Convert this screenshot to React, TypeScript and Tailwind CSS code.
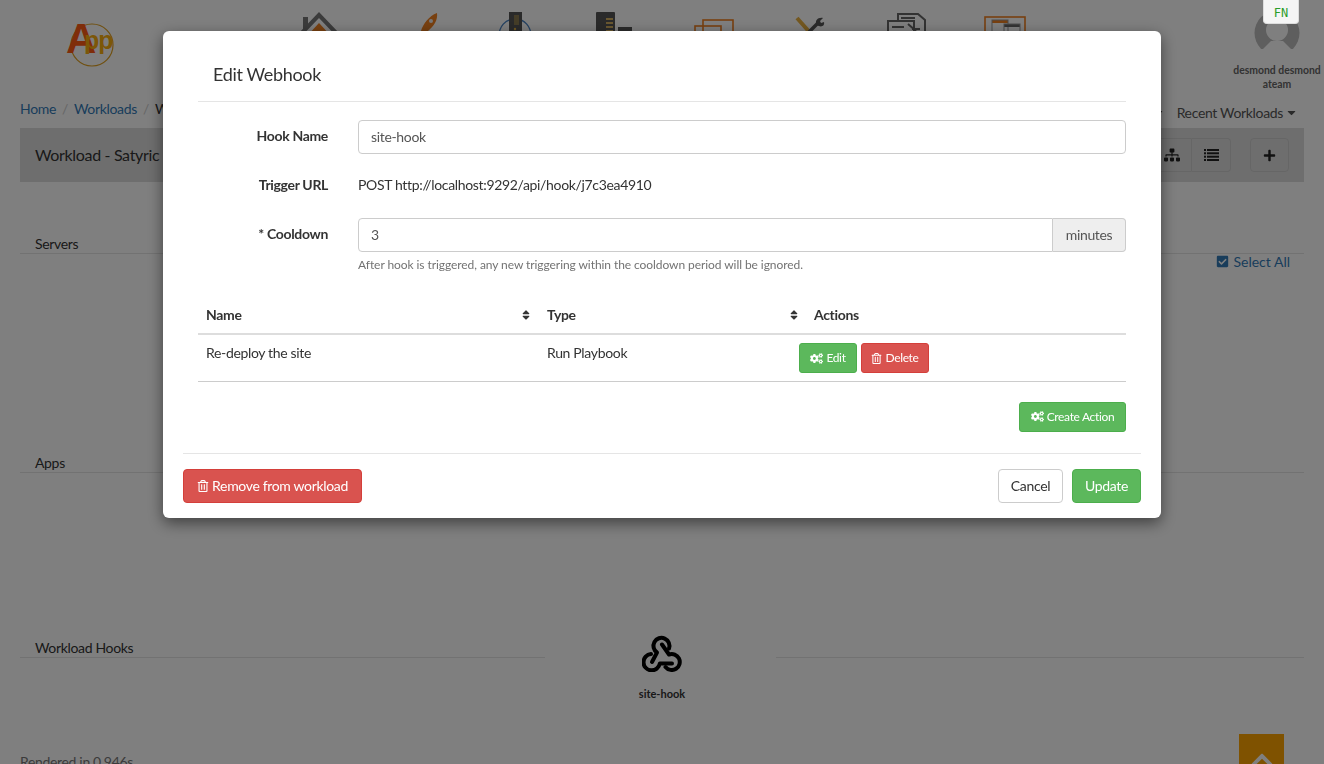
import React from "react";
import { FaCogs, FaRegTrashAlt, FaSort, FaSitemap, FaPlus, FaCheckSquare, FaCaretDown, FaChevronUp } from "react-icons/fa";

function Logo() {
  return (
    <svg width="50" height="48" viewBox="0 0 50 48" className="block">
      <circle cx="27" cy="23" r="21" fill="none" stroke="#e0a020" strokeWidth="1.2" />
      <text x="1" y="31" fontFamily="Liberation Sans, sans-serif" fontWeight="700" fontSize="42" fill="#ff5a14">A</text>
      <text x="19" y="27" fontFamily="Liberation Sans, sans-serif" fontWeight="700" fontSize="25" fill="#f8ae10" letterSpacing="-1">pp</text>
    </svg>
  );
}

function WebhookIcon() {
  return (
    <svg width="40" height="37" viewBox="0 0 40 37" fill="none" stroke="#000" strokeWidth="4" strokeLinecap="round" strokeLinejoin="round" className="block">
      <path d="M10 27 15 17.500A8 8 0 1 1 27 13.500" />
      <path d="M9 19A8.200 8.200 0 1 0 17.800 28.500H30" />
      <path d="M23.500 32A8 8 0 1 0 27 19.500L20 9.500" />
    </svg>
  );
}

function NavIcons() {
  return (
    <div className="flex ml-[155px] pt-3">
      <div className="w-[98px] flex justify-center">
        <svg width="44" height="24" viewBox="0 0 44 24">
          <path d="M6 5h5v8l-5 5z" fill="#777" />
          <path d="M2 24 22 3l20 21" fill="none" stroke="#777" strokeWidth="4" />
          <path d="M10 24 22 11l12 13z" fill="#f08020" />
        </svg>
      </div>
      <div className="w-[98px] flex justify-center">
        <svg width="36" height="24" viewBox="0 0 36 24" className="ml-[12px]">
          <path d="M32 1c1 7-3 13-9 18l-6 5H6c2-4 6-5 10-5 2-7 8-15 16-18z" fill="#f08020" />
          <circle cx="26" cy="9" r="2" fill="#eee" />
        </svg>
      </div>
      <div className="w-[98px] flex justify-center">
        <svg width="36" height="24" viewBox="0 0 36 24">
          <path d="M2 24C2 15 8 7 18 7s16 8 16 17" fill="none" stroke="#4a84c4" strokeWidth="1.4" />
          <rect x="12" y="0" width="13" height="24" fill="#555" />
          <rect x="17" y="3" width="5" height="10" fill="#8a7a50" />
          <circle cx="18" cy="17" r="1.2" fill="#e0b040" />
        </svg>
      </div>
      <div className="w-[98px] flex justify-center">
        <svg width="40" height="24" viewBox="0 0 40 24">
          <rect x="3" y="0" width="19" height="24" rx="1" fill="#555" />
          <rect x="13" y="6" width="7" height="2" fill="#d4b060" />
          <rect x="13" y="10" width="7" height="2" fill="#d4b060" />
          <rect x="13" y="14" width="7" height="2" fill="#d4b060" />
          <rect x="13" y="18" width="7" height="2" fill="#d4b060" />
          <rect x="25" y="15" width="14" height="9" fill="#555" />
        </svg>
      </div>
      <div className="w-[98px] flex justify-center">
        <svg width="42" height="24" viewBox="0 0 42 24" className="ml-[6px]">
          <rect x="10" y="8" width="30" height="24" fill="none" stroke="#f08020" strokeWidth="1.6" />
          <rect x="2" y="14" width="26" height="20" fill="none" stroke="#f08020" strokeWidth="1.6" />
        </svg>
      </div>
      <div className="w-[98px] flex justify-center">
        <svg width="40" height="24" viewBox="0 0 40 24">
          <path d="M8 6 24 24" stroke="#e8b040" strokeWidth="4" />
          <path d="M16 24 30 10" stroke="#555" strokeWidth="3.5" />
          <path d="M28 13c-3-4 1-8 6-7l-3 3 1 2 3-1c1 4-3 6-7 3z" fill="#555" />
        </svg>
      </div>
      <div className="w-[98px] flex justify-center">
        <svg width="42" height="24" viewBox="0 0 42 24">
          <path d="M12 8V2h20l7 6v16" fill="none" stroke="#666" strokeWidth="2" />
          <rect x="2" y="9" width="26" height="18" fill="none" stroke="#666" strokeWidth="2" />
          <path d="M15 6h14M6 15h12M22 12l8 7M26 17h8" stroke="#666" strokeWidth="2" />
        </svg>
      </div>
      <div className="w-[98px] flex justify-center">
        <svg width="42" height="24" viewBox="0 0 42 24">
          <rect x="1" y="5" width="40" height="24" fill="none" stroke="#f08020" strokeWidth="1.6" />
          <rect x="8" y="8" width="16" height="3" fill="#f08020" />
          <rect x="8" y="8" width="16" height="20" fill="none" stroke="#999" strokeWidth="1" />
          <rect x="20" y="12" width="16" height="3" fill="#666" />
          <rect x="20" y="12" width="16" height="20" fill="none" stroke="#999" strokeWidth="1" />
        </svg>
      </div>
    </div>
  );
}

function Avatar() {
  return (
    <svg width="46" height="46" viewBox="0 0 46 46" className="block">
      <circle cx="23" cy="23" r="22.5" fill="#bcbcbc" />
      <circle cx="23" cy="20" r="11" fill="#fff" />
      <path d="M0 46V39H9L17 31H29L37 39H46V46z" fill="#fff" />
    </svg>
  );
}

function ListIcon() {
  return (
    <svg width="15" height="12" viewBox="0 0 15 12" fill="#222">
      <rect x="0" y="0" width="2" height="2" />
      <rect x="3" y="0" width="12" height="2" />
      <rect x="0" y="3.3" width="2" height="2" />
      <rect x="3" y="3.3" width="12" height="2" />
      <rect x="0" y="6.7" width="2" height="2" />
      <rect x="3" y="6.7" width="12" height="2" />
      <rect x="0" y="10" width="2" height="2" />
      <rect x="3" y="10" width="12" height="2" />
    </svg>
  );
}

function SectionTitle({ children, className }: { children: React.ReactNode; className?: string }) {
  return <div className={"text-[14px] leading-[18px] pl-[15px] border-b border-[#e5e5e5] " + (className ?? "")}>{children}</div>;
}

function Background() {
  return (
    <div className="h-[764px] overflow-hidden bg-white text-[#333] relative">
      <div className="flex h-[96px]">
        <div className="pl-[65px] pt-[22px] w-[115px]"><Logo /></div>
        <NavIcons />
        <div className="ml-auto w-[94px] pt-[10px] flex flex-col items-center">
          <Avatar />
          <div className="text-[10.4px] tracking-normal leading-[14px] font-bold text-[#666] mt-[7px] whitespace-nowrap text-center">desmond desmond<br />ateam</div>
        </div>
      </div>
      <div className="flex items-center h-[26px] -mt-[1px] pl-[20px] pr-[26px] text-[14px]">
        <span className="text-[#337ab7]">Home</span>
        <span className="text-[#ccc] px-[6px]">/</span>
        <span className="text-[#337ab7]">Workloads</span>
        <span className="text-[#ccc] px-[6px]">/</span>
        <span>Workload</span>
        <div className="ml-auto flex items-center mt-[8px]">
          <FaCaretDown className="text-[#555] text-[13px] mr-[12px]" />
          <span className="text-[#555]">Recent Workloads</span>
          <FaCaretDown className="text-[#555] text-[13px] ml-[2px]" />
        </div>
      </div>
      <div className="mx-[20px] mt-[7px] h-[54px] bg-[#ddd] flex items-center pl-[15px] pr-[15px] text-[16px]">
        <span>Workload - Satyric</span>
        <div className="ml-auto flex">
          <button className="w-[40px] h-[34px] border border-[#ccc] rounded-l-[4px] flex items-center justify-center text-[#222]"><FaSitemap size={16} /></button>
          <button className="w-[39px] h-[34px] border border-[#ccc] border-l-0 rounded-r-[4px] flex items-center justify-center"><ListIcon /></button>
          <button className="w-[39px] h-[34px] border border-[#ccc] rounded-[4px] ml-[19px] flex items-center justify-center text-[#222]"><FaPlus size={13} /></button>
        </div>
      </div>
      <div className="mx-[20px] mt-[53px]">
        <SectionTitle>Servers</SectionTitle>
        <div className="h-[200px] flex justify-end pr-[14px]">
          <span className="flex items-center gap-[4px] h-[18px] -mt-[2px] text-[14px] tracking-normal text-[#337ab7]"><FaCheckSquare size={13} />Select All</span>
        </div>
        <SectionTitle>Apps</SectionTitle>
        <div className="h-[166px]" />
        <div className="flex">
          <SectionTitle className="w-[525px]">Workload Hooks</SectionTitle>
          <div className="w-[231px] shrink-0" />
          <div className="flex-1 border-b border-[#e5e5e5]" />
        </div>
        <div className="h-[0px] flex flex-col items-center">
          <div className="-mt-[23px] flex flex-col items-center">
            <WebhookIcon />
            <div className="text-[11px] font-bold tracking-normal leading-[14px] mt-[15px]">site-hook</div>
          </div>
        </div>
        <div className="mt-[93px] text-[14px] text-[#777]">Rendered in 0.946s</div>
      </div>
      <div className="absolute left-[1239px] top-[734px] w-[45px] h-[45px] bg-[#ffa500] flex justify-center pt-[14px]">
        <FaChevronUp size={24} className="text-white" />
      </div>
    </div>
  );
}

function Btn({ color, small, children, className }: { color: "green" | "red"; small?: boolean; children: React.ReactNode; className?: string }) {
  const c = color === "green" ? "bg-[#5cb85c] border-[#4cae4c]" : "bg-[#d9534f] border-[#d43f3a]";
  const s = small ? "h-[30px] text-[12px] rounded-[3px]" : "h-[34px] text-[14px] rounded-[4px]";
  return <button className={"inline-flex items-center justify-center gap-[3px] border text-white whitespace-nowrap " + c + " " + s + " " + (className ?? "")}>{children}</button>;
}

function Modal() {
  return (
    <div className="fixed inset-0 z-10 bg-black/50 text-[#333]">
      <div className="w-[998px] h-[487px] mx-auto mt-[31px] bg-white rounded-[6px] shadow-[0_5px_15px_rgba(0,0,0,0.5)] flex flex-col">
        <div className="mx-[35px] h-[71px] border-b border-[#e5e5e5] flex items-center pl-[15px] pt-[16px] text-[18px] shrink-0">Edit Webhook</div>
        <div className="mx-[35px] pt-[18px] text-[14px]">
          <div className="flex items-center h-[34px]">
            <label className="w-[130px] text-right font-bold pb-[3px]">Hook Name</label>
            <div className="ml-[30px] flex-1 h-[34px] border border-[#ccc] rounded-[4px] px-[12px] pb-[1px] flex items-center text-[#555]">site-hook</div>
          </div>
          <div className="flex items-center h-[34px] mt-[14px]">
            <label className="w-[130px] text-right font-bold pb-[2px]">Trigger URL</label>
            <div className="ml-[30px] flex-1 pb-[2px]">POST http://localhost:9292/api/hook/j7c3ea4910</div>
          </div>
          <div className="flex items-center h-[34px] mt-[16px]">
            <label className="w-[130px] text-right font-bold pb-[3px]">* Cooldown</label>
            <div className="ml-[30px] flex-1 flex h-[34px]">
              <div className="flex-1 border border-[#ccc] rounded-l-[4px] px-[12px] pb-[1px] flex items-center text-[#555]">3</div>
              <div className="w-[73px] border border-l-0 border-[#ccc] rounded-r-[4px] bg-[#eee] pb-[1px] flex items-center justify-center text-[#555]">minutes</div>
            </div>
          </div>
          <div className="ml-[160px] mt-[5px] text-[12px] tracking-[-0.006em] leading-[16px] text-[#737373]">After hook is triggered, any new triggering within the cooldown period will be ignored.</div>
          <table className="w-full mt-[22px] table-fixed border-collapse">
            <thead>
              <tr className="h-[39px] border-b-2 border-[#ddd]">
                <th className="w-[341px] text-left font-bold pl-[8px] pr-[7px]"><span className="flex items-center justify-between">Name<FaSort size={12} className="mt-[1px]" /></span></th>
                <th className="w-[267px] text-left font-bold pl-[8px] pr-[6px]"><span className="flex items-center justify-between">Type<FaSort size={12} className="mt-[1px]" /></span></th>
                <th className="text-left font-bold pl-[8px]">Actions</th>
              </tr>
            </thead>
            <tbody>
              <tr className="h-[47px] border-b border-[#ccc]">
                <td className="pl-[8px] align-top pt-[7px]">Re-deploy the site</td>
                <td className="pl-[8px] align-top pt-[7px]">Run Playbook</td>
                <td className="align-top pt-[8px]">
                  <div className="flex gap-[4px] -ml-[7px]">
                    <Btn color="green" small className="w-[58px]"><FaCogs size={13} />Edit</Btn>
                    <Btn color="red" small className="w-[68px]"><FaRegTrashAlt size={11} />Delete</Btn>
                  </div>
                </td>
              </tr>
            </tbody>
          </table>
          <div className="flex justify-end mt-[20px]">
            <Btn color="green" small className="w-[107px]"><FaCogs size={13} />Create Action</Btn>
          </div>
        </div>
        <div className="mx-[20px] mt-[21px] pt-[15px] border-t border-[#e5e5e5] flex items-center text-[14px]">
          <Btn color="red" className="w-[179px]"><FaRegTrashAlt size={12} />Remove from workload</Btn>
          <button className="ml-auto h-[34px] w-[65px] border border-[#ccc] rounded-[4px] bg-white">Cancel</button>
          <Btn color="green" className="ml-[9px] w-[69px]">Update</Btn>
        </div>
      </div>
    </div>
  );
}

export default function App() {
  return (
    <div className="h-[764px] w-[1324px] overflow-hidden relative tracking-[-0.021em] font-['Lato','Noto_Sans',sans-serif]">
      <Background />
      <Modal />
      <div className="fixed z-20 left-[1263px] top-0 w-[36px] h-[24px] bg-[#f5f5f5] border border-t-0 border-[#ddd] rounded-b-[4px] pt-[2px] flex items-center justify-center tracking-normal font-['DejaVu_Sans_Mono',monospace] text-[12px] text-[#2a9d2a]">FN</div>
    </div>
  );
}
